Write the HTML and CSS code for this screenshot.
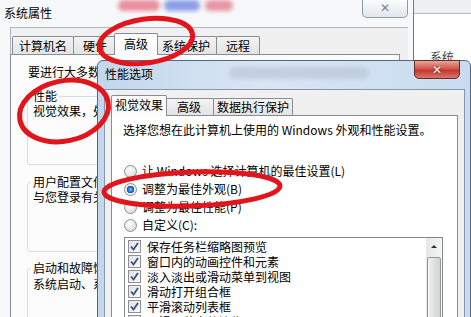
FILE: index.html
```html
<!DOCTYPE html>
<html lang="zh-CN">
<head>
    <meta charset="UTF-8">
    <title>系统属性 - 性能选项</title>
    <link rel="stylesheet" href="styles.css">
</head>
<body>
    <div class="desk">
        <div class="other">
            <div class="other-bar"></div>
            <div class="other-text">系统</div>
        </div>

        <div class="win back">
            <div class="title">
                系统属性
                <span class="smudge s1"></span>
                <span class="smudge s2"></span>
                <span class="smudge s3"></span>
                <span class="close idle">&#x2715;</span>
            </div>
            <div class="client">
                <div class="tabs">
                    <span class="tab">计算机名</span>
                    <span class="tab">硬件</span>
                    <span class="tab on">高级</span>
                    <span class="tab">系统保护</span>
                    <span class="tab">远程</span>
                </div>
                <div class="panel">
                    <p class="lead">要进行大多数更改，您必须作为管理员登录。</p>
                    <fieldset class="group g1">
                        <legend>性能</legend>
                        <p>视觉效果，处理器计划，内存使用，以及虚拟内存</p>
                    </fieldset>
                    <fieldset class="group g2">
                        <legend>用户配置文件</legend>
                        <p>与您登录有关的桌面设置</p>
                    </fieldset>
                    <fieldset class="group g3">
                        <legend>启动和故障恢复</legend>
                        <p>系统启动、系统失败和调试信息</p>
                    </fieldset>
                </div>
            </div>
        </div>

        <div class="win front">
            <div class="title">
                性能选项
                <span class="smudge s4"></span>
                <span class="close hot">&#x2715;</span>
            </div>
            <div class="client">
                <div class="tabs">
                    <span class="tab on">视觉效果</span>
                    <span class="tab">高级</span>
                    <span class="tab">数据执行保护</span>
                </div>
                <div class="panel">
                    <p class="lead">选择您想在此计算机上使用的 Windows 外观和性能设置。</p>
                    <div class="radios">
                        <div class="radio"><span class="dot"></span>让 Windows 选择计算机的最佳设置(L)</div>
                        <div class="radio"><span class="dot checked"></span>调整为最佳外观(B)</div>
                        <div class="radio"><span class="dot"></span>调整为最佳性能(P)</div>
                        <div class="radio"><span class="dot"></span>自定义(C):</div>
                    </div>
                    <div class="listbox">
                        <ul class="items">
                            <li><span class="box"><svg viewBox="0 0 9 9"><path d="M1 4.5 L3.5 7.5 L8 1"/></svg></span>保存任务栏缩略图预览</li>
                            <li><span class="box"><svg viewBox="0 0 9 9"><path d="M1 4.5 L3.5 7.5 L8 1"/></svg></span>窗口内的动画控件和元素</li>
                            <li><span class="box"><svg viewBox="0 0 9 9"><path d="M1 4.5 L3.5 7.5 L8 1"/></svg></span>淡入淡出或滑动菜单到视图</li>
                            <li><span class="box"><svg viewBox="0 0 9 9"><path d="M1 4.5 L3.5 7.5 L8 1"/></svg></span>滑动打开组合框</li>
                            <li><span class="box"><svg viewBox="0 0 9 9"><path d="M1 4.5 L3.5 7.5 L8 1"/></svg></span>平滑滚动列表框</li>
                            <li><span class="box"><svg viewBox="0 0 9 9"><path d="M1 4.5 L3.5 7.5 L8 1"/></svg></span>平滑屏幕字体边缘</li>
                        </ul>
                        <div class="scrollbar">
                            <div class="arrow"></div>
                            <div class="thumb"></div>
                        </div>
                    </div>
                </div>
            </div>
        </div>

        <!-- red circles drawn over the screenshot -->
        <svg class="marks" viewBox="0 0 471 317">
            <ellipse cx="146" cy="41" rx="47" ry="22" transform="rotate(-8 146 41)"/>
            <ellipse cx="64" cy="111" rx="45" ry="30" transform="rotate(-12 64 111)"/>
            <ellipse cx="192" cy="189" rx="88" ry="17" transform="rotate(-2 192 189)"/>
        </svg>
    </div>
</body>
</html>
```

FILE: styles.css
```css
* {
    box-sizing: border-box;
}
body {
    margin: 0;
    font: 12px/16px "Noto Sans CJK SC", "Noto Sans", sans-serif;
    color: #000;
    background: #fff;
}
p {
    margin: 0;
}
.desk {
    position: relative;
    width: 471px;
    height: 317px;
    overflow: hidden;
    background: #f4f5f7;
}

/* window behind, on the right */
.other {
    position: absolute;
    left: 413px;
    top: 0;
    width: 58px;
    height: 90px;
    background: #fff;
    border-left: 1px solid #4a4f55;
}
.other-bar {
    height: 14px;
    background: #eef0f3;
    border-bottom: 1px solid #b5b9be;
}
.other-text {
    padding: 35px 0 0 16px;
    color: #444;
}

.win {
    position: absolute;
}
.title {
    position: relative;
}
.smudge {
    position: absolute;
    z-index: 0;
    filter: blur(2px);
    border-radius: 6px;
    opacity: 0.8;
}
.close {
    position: absolute;
    width: 46px;
    text-align: center;
    font: bold 12px/17px "DejaVu Sans", sans-serif;
    border-radius: 0 0 5px 5px;
}
.close.idle {
    top: 0;
    right: 5px;
    height: 18px;
    color: #7a8594;
    background: linear-gradient(#fbfcfd, #e1e6ec);
    border: 1px solid #8d99a8;
    border-top: 0;
}
.close.hot {
    top: -1px;
    right: 5px;
    height: 19px;
    color: #fff;
    background: linear-gradient(#e8a69c, #d3564a 45%, #c4382e 55%, #d8776c);
    border: 1px solid #6a2a26;
    text-shadow: 0 0 2px #4a1010;
    line-height: 18px;
}

/* 系统属性 */
.back {
    left: 0;
    top: 0;
    width: 414px;
    height: 340px;
    background: #f7f8fa;
    border-right: 1px solid #707884;
}
.back .title {
    height: 27px;
    padding: 5px 0 0 4px;
}
.s1 { left: 118px; top: 0; width: 42px; height: 11px; background: #e57588; }
.s2 { left: 164px; top: 0; width: 36px; height: 11px; background: #7088df; }
.s3 { left: 205px; top: 0; width: 28px; height: 11px; background: #e27d8e; }
.back .client {
    margin-left: 10px;
    width: 398px;
    height: 313px;
    background: #f0f0f0;
    border-top: 1px solid #b1b7bf;
    border-left: 1px solid #b1b7bf;
}
.tabs {
    display: flex;
    align-items: flex-end;
}
.tab {
    height: 18px;
    min-width: 44px;
    padding: 1px 6px 0;
    margin-right: -1px;
    border: 1px solid #898c95;
    border-bottom: 0;
    border-radius: 2px 2px 0 0;
    background: linear-gradient(#f3f3f3, #e2e3e5);
    text-align: center;
    white-space: nowrap;
}
.tab.on {
    position: relative;
    z-index: 1;
    height: 22px;
    padding-top: 2px;
    margin: 0 -3px -1px -2px;
    background: #fcfcfc;
}
.back .tabs {
    height: 26px;
    padding-left: 1px;
}
.back .panel {
    height: 290px;
    margin: 0 8px 0 -1px;
    padding: 9px 0 0 16px;
    background: #fcfcfc;
    border: 1px solid #898c95;
    white-space: nowrap;
}
.back .lead {
    padding-left: 1px;
}
.group {
    width: 370px;
    margin: 9px 0 0;
    padding: 0 5px 45px;
    border: 1px solid #d5dfe5;
    border-radius: 3px;
}
.group legend {
    padding: 0 2px;
    margin-left: -2px;
    line-height: 14px;
}
.g2 {
    margin-top: 10px;
    padding-bottom: 46px;
}
.g3 p {
    padding-top: 1px;
}

/* 性能选项 */
.front {
    left: 97px;
    top: 60px;
    width: 374px;
    height: 270px;
    padding: 0 5px 0 6px;
    border: 1px solid #56687e;
    border-radius: 6px 6px 0 0;
    background: linear-gradient(90deg, #c3d6ec, #d9e6f4 45%, #c8dbf0);
}
.front .title {
    height: 28px;
    padding: 5px 0 0 1px;
}
.s4 { left: 125px; top: 6px; width: 140px; height: 12px; background: #bccadb; }
.front .client {
    height: 250px;
    padding: 0 6px;
    background: #f0f0f0;
    border: 1px solid #8797ab;
}
.front .tabs {
    height: 25px;
    padding-left: 2px;
}
.front .tab {
    height: 17px;
    min-width: 50px;
    padding: 0 3px;
}
.front .tab.on {
    height: 21px;
    padding-top: 1px;
}
.front .panel {
    height: 220px;
    padding: 6px 0 0 11px;
    background: #fff;
    border: 1px solid #898c95;
}
.radios {
    margin-top: 24px;
}
.radio {
    display: flex;
    align-items: center;
    height: 18px;
}
.dot {
    width: 13px;
    height: 13px;
    margin: 0 5px 0 1px;
    border: 1px solid #8e8f8f;
    border-radius: 50%;
    background: radial-gradient(circle at 40% 35%, #fff, #e4e4e4 60%, #cfcfcf);
}
.dot.checked {
    background: radial-gradient(circle, #7fd0ff 0, #2a7fd4 2px, #1e4d9c 3.5px, #f2f2f2 4px, #dcdcdc);
}
.listbox {
    display: flex;
    width: 319px;
    height: 100px;
    margin: 3px 0 0 1px;
    background: #fff;
    border: 1px solid #828790;
}
.items {
    flex: 1;
    margin: 0;
    padding: 1px 0 0 3px;
    list-style: none;
}
.items li {
    display: flex;
    align-items: center;
    height: 15px;
}
.box {
    width: 13px;
    height: 13px;
    margin-right: 6px;
    padding: 1px;
    border: 1px solid #8f8f8f;
    background: linear-gradient(135deg, #dfe3e8, #f9fafb);
}
.box svg {
    display: block;
    width: 9px;
    height: 9px;
}
.box path {
    fill: none;
    stroke: #3b4f8c;
    stroke-width: 1.8;
}
.scrollbar {
    width: 16px;
    background: linear-gradient(90deg, #e6e6e6, #f6f6f6);
}
.arrow {
    height: 17px;
    position: relative;
}
.arrow::after {
    content: "";
    position: absolute;
    left: 5px;
    top: 7px;
    border: 3px solid transparent;
    border-top: 0;
    border-bottom: 3px solid #303030;
}
.thumb {
    height: 80px;
    margin: 2px 1px 0;
    border: 1px solid #979797;
    border-radius: 2px;
    background: linear-gradient(90deg, #f4f4f4, #e0e0e0 50%, #d3d3d3);
}

.marks {
    position: absolute;
    left: 0;
    top: 0;
    width: 471px;
    height: 317px;
    pointer-events: none;
}
.marks ellipse {
    fill: none;
    stroke: #e2151d;
    stroke-width: 5;
}
```
